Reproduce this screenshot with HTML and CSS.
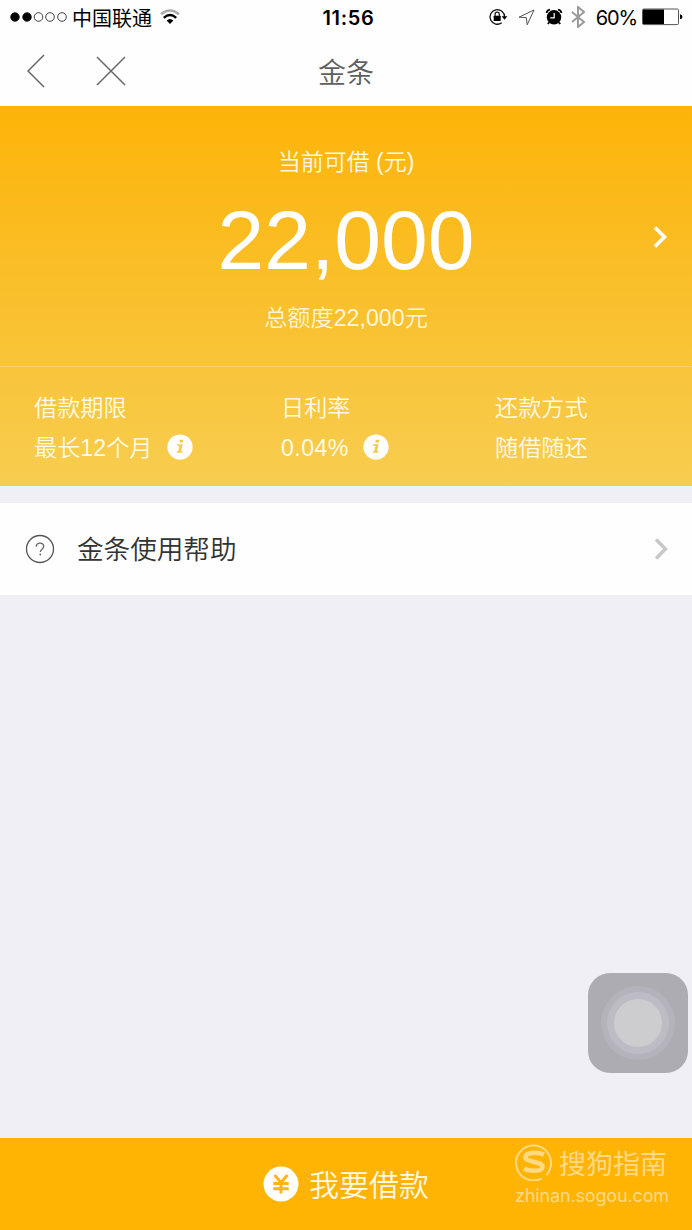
FILE: index.html
```html
<!DOCTYPE html>
<html lang="zh-CN">
<head>
<meta charset="utf-8">
<title>金条</title>
<link rel="stylesheet" href="styles.css">
</head>
<body>
<div class="screen">
  <header class="status">
    <div class="carrier">
      <svg class="signal" width="58" height="12" viewBox="0 0 58 12"><g stroke="#111" stroke-width=".8" fill="none"><circle cx="5" cy="6" r="4.300" fill="#000"/><circle cx="17" cy="6" r="4.300" fill="#000"/><circle cx="28.500" cy="6" r="4.300"/><circle cx="40" cy="6" r="4.300"/><circle cx="52" cy="6" r="4.300"/></g></svg>
      <span class="carrier-name">中国联通</span>
      <svg width="20" height="16" viewBox="0 0 20 16"><g fill="none" stroke-width="2.400"><path d="M1 5.200Q10-2 19 5.200" stroke="#aaa"/><path d="M3.800 8.800Q10 3.300 16.200 8.800" stroke="#000"/></g><path d="M6.600 11.600Q10 8.600 13.400 11.600L10 15Z"/></svg>
    </div>
    <time class="clock">11:56</time>
    <div class="indicators">
      <svg class="lock" width="20" height="18" viewBox="0 0 20 18"><path d="M13.800 14.700A7.300 7.300 0 1 1 16.600 9" fill="none" stroke="#111" stroke-width="1.300"/><path d="M13.600 8.200h5.800l-2.900 3.500z"/><rect x="5.700" y="7.700" width="7" height="5.400" rx=".6"/><path d="M7.100 8V6.300a2.100 2.100 0 0 1 4.200 0V8" fill="none" stroke="#111" stroke-width="1.200"/></svg>
      <svg class="arrow" width="17" height="17" viewBox="0 0 17 17"><path d="M1 8.200 16 1 9.200 15.800 8.300 8.600z" fill="none" stroke="#555" stroke-width="1"/></svg>
      <svg class="alarm" width="18" height="18" viewBox="0 0 18 18"><circle cx="9" cy="9.300" r="7.200"/><path d="M1.600 5Q2 2 5 1.700M16.400 5Q16 2 13 1.700M4 14.500 2.800 16M14 14.500l1.200 1.500" stroke="#000" stroke-width="1.800" fill="none"/><path d="M9.200 5v4.800H5.300" stroke="#fff" stroke-width="1.200" fill="none"/></svg>
      <svg class="bluetooth" width="14" height="22" viewBox="0 0 14 22"><path d="m1 6 12 10-6 5V1l6 5L1 16" fill="none" stroke="#999" stroke-width="1.900"/></svg>
      <span class="percent">60%</span>
      <svg class="battery" width="41" height="18" viewBox="0 0 41 18"><rect x=".5" y="1" width="36" height="15.600" rx="1.200" fill="#fff" stroke="#555"/><path d="M1 1.500h21v14.600H1zM38 6.300q2.500.5 2.500 2.500T38 11.300z"/></svg>
    </div>
  </header>
  <nav class="nav">
    <svg class="back" width="18" height="34" viewBox="0 0 18 34"><path d="M17 1 1 17l16 16" fill="none" stroke="#666" stroke-width="1.500"/></svg>
    <svg class="close" width="30" height="30" viewBox="0 0 30 30"><path d="m1 1 28 28M29 1 1 29" fill="none" stroke="#666" stroke-width="1.500"/></svg>
    <h1 class="title">金条</h1>
  </nav>
  <section class="card">
    <div class="quota">
      <span></span>
      <div class="quota-text">
        <p class="label">当前可借 (元)</p>
        <p class="amount">22,000</p>
        <p class="total">总额度22,000元</p>
      </div>
      <svg class="chevron" width="16" height="22" viewBox="0 0 16 22"><path d="m2 1.500 9.500 9.500L2 20.500" fill="none" stroke="#fff" stroke-width="3.600"/></svg>
    </div>
    <div class="terms">
      <div><p>借款期限</p><p>最长12个月<svg class="info" width="26" height="26" viewBox="0 0 26 26"><circle cx="13" cy="13" r="12.600" fill="#fff"/><path d="M12.900 5.700h3.500l-.6 2.900h-3.500zM10.200 10.300h5.300l-1.500 7h1.500l-.3 1.500H9.800l.3-1.500h1.200l1.200-5.500h-2.600z" fill="#f3c64c"/></svg></p></div>
      <div><p>日利率</p><p><span class="rate">0.04%</span><svg class="info" width="26" height="26" viewBox="0 0 26 26"><circle cx="13" cy="13" r="12.600" fill="#fff"/><path d="M12.900 5.700h3.500l-.6 2.900h-3.500zM10.200 10.300h5.300l-1.500 7h1.500l-.3 1.500H9.800l.3-1.500h1.200l1.200-5.500h-2.600z" fill="#f3c64c"/></svg></p></div>
      <div><p>还款方式</p><p>随借随还</p></div>
    </div>
  </section>
  <section class="help">
    <svg width="30" height="30" viewBox="0 0 30 30"><circle cx="15" cy="15" r="13.500" fill="none" stroke="#555" stroke-width="1.300"/><path d="M11.300 12.700c0-2.300 1.500-3.500 3.700-3.500s3.700 1.300 3.700 3.300c0 2.700-3.400 2.700-3.400 5.600" fill="none" stroke="#666" stroke-width="1.300"/><circle cx="15.300" cy="20.500" r=".9" fill="#666"/></svg>
    <span class="help-text">金条使用帮助</span>
    <svg class="chevron" width="16" height="22" viewBox="0 0 16 22"><path d="m2 1.500 9.500 9.500L2 20.500" fill="none" stroke="#c7c7cb" stroke-width="3.400"/></svg>
  </section>
  <main class="blank"></main>
  <footer class="borrow">
    <svg width="36" height="36" viewBox="0 0 36 36"><circle cx="18" cy="18" r="17.500" fill="#fff"/><path d="m11.500 9 6.500 7.500L24.500 9M18 16.500V27.500M10.300 17.500h15.400M10.300 22.800h15.400" fill="none" stroke="#fdb515" stroke-width="2.900"/></svg>
    <span class="borrow-text">我要借款</span>
  </footer>
  <svg class="touch" width="100" height="100" viewBox="0 0 100 100"><rect width="100" height="100" rx="22" fill="#adacb3"/><circle cx="50" cy="50" r="37" fill="#b4b3bb"/><circle cx="50" cy="50" r="31" fill="#bdbcc4"/><circle cx="50" cy="50" r="24" fill="#cdcdcf"/></svg>
  <div class="watermark">
    <div class="brand"><svg width="38" height="38" viewBox="0 0 38 38"><path d="M27 35.300A17.500 17.500 0 1 1 35 26q-1 3.500-3.700 6.300" fill="none" stroke="currentColor" stroke-width="2"/><path d="M29 11.800C24 9 10.500 8.700 10.500 14.200c0 5.500 17 4 17 9.500 0 5.300-13 5-18.500 1.800" fill="none" stroke="currentColor" stroke-width="4.600"/></svg><span class="brand-name">搜狗指南</span></div>
    <div class="site">zhinan.sogou.com</div>
  </div>
</div>
</body>
</html>
```
FILE: styles.css
```css
* { box-sizing: border-box; }
body { margin: 0; font-family: "Liberation Sans", "Noto Sans CJK SC", sans-serif; font-weight: 400; }
h1, p { margin: 0; font-weight: inherit; }
svg { display: block; flex: none; }
.screen { position: relative; width: 692px; height: 1230px; display: flex; flex-direction: column; background: #f0eff5; overflow: hidden; white-space: nowrap; }
.status { height: 36px; padding: 0 9px 2px 10px; display: grid; grid-template-columns: 1fr auto 1fr; align-items: center; background: #fefefe; color: #000; }
.carrier { display: flex; align-items: center; }
.carrier-name { margin: 0 8px 0 4px; padding-top: 3px; font-size: 20px; line-height: 30px; }
.clock { padding: 1px 0 0 4px; font: 600 20px/30px Inter, sans-serif; letter-spacing: .7px; }
.indicators { display: flex; align-items: center; justify-content: flex-end; }
.arrow { margin-left: 10px; }
.alarm { margin-left: 10px; }
.bluetooth { margin-left: 8px; }
.percent { margin: 0 5px 0 11px; padding-top: 2px; font: 400 20px/30px Inter, sans-serif; letter-spacing: -1.1px; }
.nav { height: 70px; display: grid; grid-template-columns: 69px 249px 1fr; align-items: center; background: #fefefe; }
.back { margin-left: 27px; }
.close { margin-left: 27px; }
.title { padding-top: 5px; font-size: 28px; line-height: 40px; font-weight: 350; color: #606060; }
.card { height: 380px; background: linear-gradient(#fdb408, #f9c130 55%, #f8cd50); color: #fff; }
.quota { height: 260px; display: grid; grid-template-columns: 40px 1fr 40px; }
.quota-text { padding-top: 40px; text-align: center; font-weight: 350; }
.quota .chevron { margin-top: 120px; margin-left: 1px; }
.label { font-size: 23px; line-height: 32px; color: #fff8e2; }
.amount { margin-top: 14px; font-size: 84px; line-height: 96px; }
.total { margin-top: 14px; font-size: 23.200px; line-height: 32px; color: #fff5d5; }
.terms { height: 120px; padding: 21px 34px; display: grid; grid-template-columns: 247px 214px 1fr; border-top: 1px solid #fbd160; font-size: 23.200px; line-height: 40px; color: #fffae3; font-weight: 350; }
.terms p { display: flex; align-items: center; height: 40px; }
.rate { letter-spacing: .4px; }
.info { margin: -2px 0 0 14px; }
.help { height: 92px; margin-top: 17px; padding: 0 22px 0 25px; display: flex; align-items: center; background: #fefefe; color: #333; }
.help-text { flex: 1; margin-left: 22px; padding-top: 2px; font-size: 26.600px; line-height: 40px; font-weight: 350; }
.blank { flex: 1; }
.borrow { height: 92px; display: flex; align-items: center; justify-content: center; gap: 10px; background: #ffb303; color: #fff9e5; font-size: 30px; line-height: 44px; font-weight: 350; }
.borrow-text { padding-top: 3px; }
.touch { position: absolute; left: 588px; top: 973px; }
.watermark { position: absolute; left: 515px; top: 1142px; color: #ffda83; }
.brand { display: flex; align-items: center; height: 40px; gap: 6px; font-size: 27px; line-height: 40px; }
.brand-name { padding-top: 5px; }
.site { padding-top: 1px; font: 400 18px/26px Inter, sans-serif; letter-spacing: -.15px; }
```
